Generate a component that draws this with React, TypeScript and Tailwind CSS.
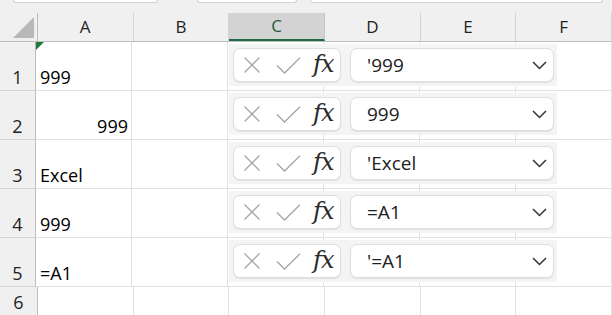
// Excel-sheet met per rij een nagebootste formulebalk erover.
const font = "font-['Open_Sans',sans-serif]";

const columns = ['A', 'B', 'C', 'D', 'E', 'F'];

const rows = [
  { n: 1, a: '999', align: 'left', bar: "'999", flag: true },
  { n: 2, a: '999', align: 'right', bar: '999' },
  { n: 3, a: 'Excel', align: 'left', bar: "'Excel" },
  { n: 4, a: '999', align: 'left', bar: '=A1' },
  { n: 5, a: '=A1', align: 'left', bar: "'=A1" },
];

function FormulaBar({ text }: { text: string }) {
  return (
    <div className="absolute left-[193px] top-[2px] w-[328px] h-[42px] bg-[#f4f4f4] flex items-center gap-[9px] pl-[4px] z-10">
      <div className="w-[108px] h-[34px] bg-white rounded-[7px] border border-[#dedede] shadow-[0_1px_1px_rgba(0,0,0,0.08)] flex items-center pl-[9px]">
        <svg width="18" height="16" viewBox="0 0 18 16" className="shrink-0">
          <path d="M1.5 0.5 L16.5 15.5 M16.5 0.5 L1.5 15.5" stroke="#a6a6a6" strokeWidth="1.3" fill="none" />
        </svg>
        <svg width="25" height="17" viewBox="0 0 25 17" className="ml-[15px] shrink-0">
          <path d="M1 8.5 L8.5 16 L24 0.8" stroke="#a6a6a6" strokeWidth="1.3" fill="none" />
        </svg>
        <span className="ml-[12px] font-['DejaVu_Serif',serif] italic text-[24px] leading-none text-[#2b2b2b] tracking-[-1px] -mt-[3px]">
          fx
        </span>
      </div>
      <div className="w-[204px] h-[34px] bg-white rounded-[7px] border border-[#dedede] shadow-[0_1px_1px_rgba(0,0,0,0.08)] flex items-center pl-[16px] pr-[6px]">
        <span className={`${font} flex-1 text-[19px] leading-none text-[#222]`}>{text}</span>
        <svg width="15" height="9" viewBox="0 0 15 9" className="shrink-0">
          <path d="M1 1 L7.5 7.5 L14 1" stroke="#333" strokeWidth="1.5" fill="none" />
        </svg>
      </div>
    </div>
  );
}

export default function App() {
  return (
    <div className={`${font} w-[612px] h-[315px] overflow-hidden bg-white text-black`}>
      {/* stukje van het lint erboven */}
      <div className="h-[13px] bg-[#f0f0f0] relative">
        <div className="absolute left-[13px] top-0 w-[145px] h-[3px] bg-white border border-t-0 border-[#d2d2d2] rounded-b-[3px]" />
        <div className="absolute left-[197px] top-0 w-[100px] h-[3px] bg-white border border-t-0 border-[#d2d2d2] rounded-b-[3px]" />
        <div className="absolute left-[310px] top-0 w-[293px] h-[3px] bg-white border border-t-0 border-[#d2d2d2] rounded-b-[3px]" />
      </div>

      {/* kolomkoppen */}
      <div className="flex h-[29px] bg-[#f0f0f0] border-b border-[#bdbdbd]">
        <div className="w-[38px] border-r border-[#bdbdbd] flex items-end justify-end pr-[3px] pb-[3px]">
          <div className="w-0 h-0 border-l-[21px] border-l-transparent border-b-[21px] border-b-[#b8b8b8]" />
        </div>
        {columns.map((c) =>
          c === 'C' ? (
            <div
              key={c}
              className="w-[96px] bg-[#d3d3d3] border-r border-[#c6c6c6] border-b-2 border-b-[#1e6b43] flex items-center justify-center text-[17px] text-[#1d5c3b]"
            >
              {c}
            </div>
          ) : (
            <div
              key={c}
              className="w-[96px] border-r border-[#d4d4d4] flex items-center justify-center text-[17px] text-[#222]"
            >
              {c}
            </div>
          )
        )}
      </div>

      {/* rijen */}
      {rows.map((r) => (
        <div key={r.n} className="flex h-[49px]">
          <div className="w-[38px] bg-[#f0f0f0] border-r border-b border-r-[#bdbdbd] border-b-[#d4d4d4] flex items-end justify-center pb-[4px] text-[18px] leading-none text-[#222]">
            {r.n}
          </div>
          <div className="relative flex">
            <div
              className={`w-[96px] border-r border-b border-[#e1e1e1] flex items-end pb-[4px] text-[18px] leading-none relative ${
                r.align === 'right' ? 'justify-end pr-[3px]' : 'pl-[4px]'
              }`}
            >
              {r.flag && (
                <div className="absolute left-0 top-0 w-0 h-0 border-t-[8px] border-t-[#1f7a3a] border-r-[8px] border-r-transparent" />
              )}
              {r.a}
            </div>
            {columns.slice(1).map((c) => (
              <div key={c} className="w-[96px] border-r border-b border-[#e1e1e1]" />
            ))}
            <FormulaBar text={r.bar} />
          </div>
        </div>
      ))}
      <div className="flex h-[49px]">
        <div className="w-[38px] bg-[#f0f0f0] border-r border-[#bdbdbd] flex items-start justify-center pt-[6px] text-[18px] leading-none text-[#222]">
          6
        </div>
        {columns.map((c) => (
          <div key={c} className="w-[96px] border-r border-[#e1e1e1]" />
        ))}
      </div>
    </div>
  );
}
